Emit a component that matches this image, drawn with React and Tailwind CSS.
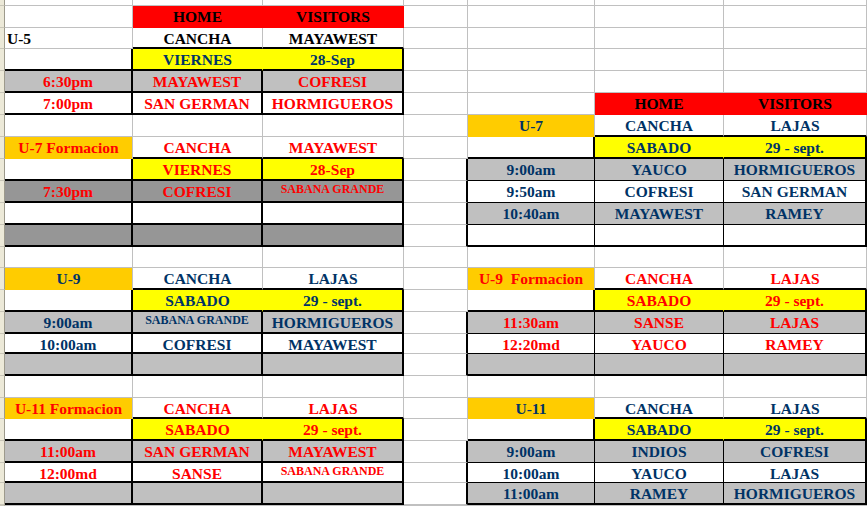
import React from 'react'

const BG = {
  w: 'bg-white',
  red: 'bg-[#ff0000]',
  y: 'bg-[#ffff00]',
  o: 'bg-[#ffcc00]',
  g: 'bg-[#c0c0c0]',
  d: 'bg-[#969696]',
}

const FG = {
  k: 'text-black',
  r: 'text-[#ff0000]',
  n: 'text-[#003366]',
}

// right / bottom edge of a cell: gray gridline, thick black, thin black, or none (fill shows)
const RE = {
  g: 'border-r border-r-[#c0c0c0]',
  k: 'border-r-2 border-r-black',
  t: 'border-r border-r-black',
  n: 'border-r border-r-transparent',
}

const BE = {
  g: 'border-b border-b-[#c0c0c0]',
  k: 'border-b-2 border-b-black',
  t: 'border-b border-b-black',
  n: 'border-b border-b-transparent',
}

// rows of the sheet, columns A..G (D is the spacer column)
const rows = [
  [],
  [null, { t: 'HOME', bg: 'red', r: 'n', b: 'n' }, { t: 'VISITORS', bg: 'red', r: 'n', b: 'n' }],
  [
    { t: 'U-5', left: true },
    { t: 'CANCHA', b: 'k' },
    { t: 'MAYAWEST', b: 'k' },
  ],
  [
    { r: 'k', b: 'k' },
    { t: 'VIERNES', bg: 'y', fg: 'n', r: 'n', b: 'k' },
    { t: '28-Sep', bg: 'y', fg: 'n', r: 'k', b: 'k' },
  ],
  [
    { t: '6:30pm', bg: 'g', fg: 'r', r: 'k', b: 'k' },
    { t: 'MAYAWEST', bg: 'g', fg: 'r', r: 'k', b: 'k' },
    { t: 'COFRESI', bg: 'g', fg: 'r', r: 'k', b: 'k' },
  ],
  [
    { t: '7:00pm', fg: 'r', r: 'k', b: 'k' },
    { t: 'SAN GERMAN', fg: 'r', r: 'k', b: 'k' },
    { t: 'HORMIGUEROS', fg: 'r', r: 'k', b: 'k' },
    null,
    null,
    { t: 'HOME', bg: 'red', r: 'n', b: 'n' },
    { t: 'VISITORS', bg: 'red', r: 'n', b: 'n' },
  ],
  [
    null,
    null,
    null,
    null,
    { t: 'U-7', bg: 'o', fg: 'n', b: 'n' },
    { t: 'CANCHA', fg: 'n', b: 'k' },
    { t: 'LAJAS', fg: 'n', b: 'k' },
  ],
  [
    { t: 'U-7 Formacion', bg: 'o', fg: 'r', b: 'n' },
    { t: 'CANCHA', fg: 'r', b: 'k' },
    { t: 'MAYAWEST', fg: 'r', b: 'k' },
    null,
    { r: 'k', b: 'k' },
    { t: 'SABADO', bg: 'y', fg: 'n', r: 'n', b: 'k' },
    { t: '29 - sept.', bg: 'y', fg: 'n', r: 'k', b: 'k' },
  ],
  [
    { r: 'k', b: 'k' },
    { t: 'VIERNES', bg: 'y', fg: 'r', r: 'k', b: 'k' },
    { t: '28-Sep', bg: 'y', fg: 'r', r: 'k', b: 'k' },
    { r: 'k' },
    { t: '9:00am', bg: 'g', fg: 'n', r: 't', b: 't' },
    { t: 'YAUCO', bg: 'g', fg: 'n', r: 't', b: 't' },
    { t: 'HORMIGUEROS', bg: 'g', fg: 'n', r: 'k', b: 't' },
  ],
  [
    { t: '7:30pm', bg: 'd', fg: 'r', r: 'k', b: 'k' },
    { t: 'COFRESI', bg: 'd', fg: 'r', r: 'k', b: 'k' },
    { t: 'SABANA GRANDE', bg: 'd', fg: 'r', r: 'k', b: 'k', small: true },
    { r: 'k' },
    { t: '9:50am', fg: 'n', r: 't', b: 't' },
    { t: 'COFRESI', fg: 'n', r: 't', b: 't' },
    { t: 'SAN GERMAN', fg: 'n', r: 'k', b: 't' },
  ],
  [
    { r: 'k', b: 'k' },
    { r: 'k', b: 'k' },
    { r: 'k', b: 'k' },
    { r: 'k' },
    { t: '10:40am', bg: 'g', fg: 'n', r: 't', b: 't' },
    { t: 'MAYAWEST', bg: 'g', fg: 'n', r: 't', b: 't' },
    { t: 'RAMEY', bg: 'g', fg: 'n', r: 'k', b: 't' },
  ],
  [
    { bg: 'd', r: 'k', b: 'k' },
    { bg: 'd', r: 'k', b: 'k' },
    { bg: 'd', r: 'k', b: 'k' },
    { r: 'k' },
    { r: 't', b: 'k' },
    { r: 't', b: 'k' },
    { r: 'k', b: 'k' },
  ],
  [],
  [
    { t: 'U-9', bg: 'o', fg: 'n', b: 'n' },
    { t: 'CANCHA', fg: 'n', b: 'k' },
    { t: 'LAJAS', fg: 'n', b: 'k' },
    null,
    { t: 'U-9  Formacion', bg: 'o', fg: 'r', b: 'n' },
    { t: 'CANCHA', fg: 'r', b: 'k' },
    { t: 'LAJAS', fg: 'r', b: 'k' },
  ],
  [
    { r: 'k', b: 'k' },
    { t: 'SABADO', bg: 'y', fg: 'n', r: 'n', b: 'k' },
    { t: '29 - sept.', bg: 'y', fg: 'n', r: 'k', b: 'k' },
    null,
    { r: 'k', b: 'k' },
    { t: 'SABADO', bg: 'y', fg: 'r', r: 'n', b: 'k' },
    { t: '29 - sept.', bg: 'y', fg: 'r', r: 'k', b: 'k' },
  ],
  [
    { t: '9:00am', bg: 'g', fg: 'n', r: 'k', b: 'k' },
    { t: 'SABANA GRANDE', bg: 'g', fg: 'n', r: 'k', b: 'k', small: true },
    { t: 'HORMIGUEROS', bg: 'g', fg: 'n', r: 'k', b: 'k' },
    { r: 'k' },
    { t: '11:30am', bg: 'g', fg: 'r', r: 't', b: 't' },
    { t: 'SANSE', bg: 'g', fg: 'r', r: 't', b: 't' },
    { t: 'LAJAS', bg: 'g', fg: 'r', r: 'k', b: 't' },
  ],
  [
    { t: '10:00am', fg: 'n', r: 'k', b: 'k' },
    { t: 'COFRESI', fg: 'n', r: 'k', b: 'k' },
    { t: 'MAYAWEST', fg: 'n', r: 'k', b: 'k' },
    { r: 'k' },
    { t: '12:20md', fg: 'r', r: 't', b: 't' },
    { t: 'YAUCO', fg: 'r', r: 't', b: 't' },
    { t: 'RAMEY', fg: 'r', r: 'k', b: 't' },
  ],
  [
    { bg: 'g', r: 'k', b: 'k' },
    { bg: 'g', r: 'k', b: 'k' },
    { bg: 'g', r: 'k', b: 'k' },
    { r: 'k' },
    { bg: 'g', r: 't', b: 'k' },
    { bg: 'g', r: 't', b: 'k' },
    { bg: 'g', r: 'k', b: 'k' },
  ],
  [],
  [
    { t: 'U-11 Formacion', bg: 'o', fg: 'r', b: 'n' },
    { t: 'CANCHA', fg: 'r', b: 'k' },
    { t: 'LAJAS', fg: 'r', b: 'k' },
    null,
    { t: 'U-11', bg: 'o', fg: 'n', b: 'n' },
    { t: 'CANCHA', fg: 'n', b: 'k' },
    { t: 'LAJAS', fg: 'n', b: 'k' },
  ],
  [
    { r: 'k', b: 'k' },
    { t: 'SABADO', bg: 'y', fg: 'r', r: 'n', b: 'k' },
    { t: '29 - sept.', bg: 'y', fg: 'r', r: 'k', b: 'k' },
    null,
    { r: 'k', b: 'k' },
    { t: 'SABADO', bg: 'y', fg: 'n', r: 'n', b: 'k' },
    { t: '29 - sept.', bg: 'y', fg: 'n', r: 'k', b: 'k' },
  ],
  [
    { t: '11:00am', bg: 'g', fg: 'r', r: 'k', b: 'k' },
    { t: 'SAN GERMAN', bg: 'g', fg: 'r', r: 'k', b: 'k' },
    { t: 'MAYAWEST', bg: 'g', fg: 'r', r: 'k', b: 'k' },
    { r: 'k' },
    { t: '9:00am', bg: 'g', fg: 'n', r: 't', b: 't' },
    { t: 'INDIOS', bg: 'g', fg: 'n', r: 't', b: 't' },
    { t: 'COFRESI', bg: 'g', fg: 'n', r: 'k', b: 't' },
  ],
  [
    { t: '12:00md', fg: 'r', r: 'k', b: 'k' },
    { t: 'SANSE', fg: 'r', r: 'k', b: 'k' },
    { t: 'SABANA GRANDE', fg: 'r', r: 'k', b: 'k', small: true },
    { r: 'k' },
    { t: '10:00am', fg: 'n', r: 't', b: 't' },
    { t: 'YAUCO', fg: 'n', r: 't', b: 't' },
    { t: 'LAJAS', fg: 'n', r: 'k', b: 't' },
  ],
  [
    { bg: 'g', r: 'k', b: 'k' },
    { bg: 'g', r: 'k', b: 'k' },
    { bg: 'g', r: 'k', b: 'k' },
    { r: 'k' },
    { t: '11:00am', bg: 'g', fg: 'n', r: 't', b: 'k' },
    { t: 'RAMEY', bg: 'g', fg: 'n', r: 't', b: 'k' },
    { t: 'HORMIGUEROS', bg: 'g', fg: 'n', r: 'k', b: 'k' },
  ],
  [],
]

function Cell({ c }) {
  const { t = '', bg = 'w', fg = 'k', r = 'g', b = 'g', left, small } = c || {}
  return (
    <div
      className={`overflow-hidden whitespace-pre ${BG[bg]} ${FG[fg]} ${RE[r]} ${BE[b]} ${
        left ? 'pl-[2px] text-left' : 'text-center'
      } ${small ? 'pt-px text-[12px] leading-[14px]' : 'text-[15.5px] leading-[21px]'}`}
    >
      {t}
    </div>
  )
}

export default function App() {
  return (
    <div className="grid h-[506px] w-[867px] grid-cols-[5px_128px_130px_141px_64px_127px_129px_143px] grid-rows-[6px_22px_21px_22px_22px_22px_22px_22px_22px_22px_22px_22px_21px_22px_22px_22px_20px_22px_22px_21px_22px_22px_20px_22px_1px] overflow-hidden bg-white font-['Liberation_Serif',serif] font-bold">
      {rows.map((row, i) => (
        <React.Fragment key={i}>
          <div className="border-r border-b border-r-[#9d9a8c] border-b-[#c9c6b8] bg-[#ece9d8]" />
          {[0, 1, 2, 3, 4, 5, 6].map(j => (
            <Cell key={j} c={row[j]} />
          ))}
        </React.Fragment>
      ))}
    </div>
  )
}
